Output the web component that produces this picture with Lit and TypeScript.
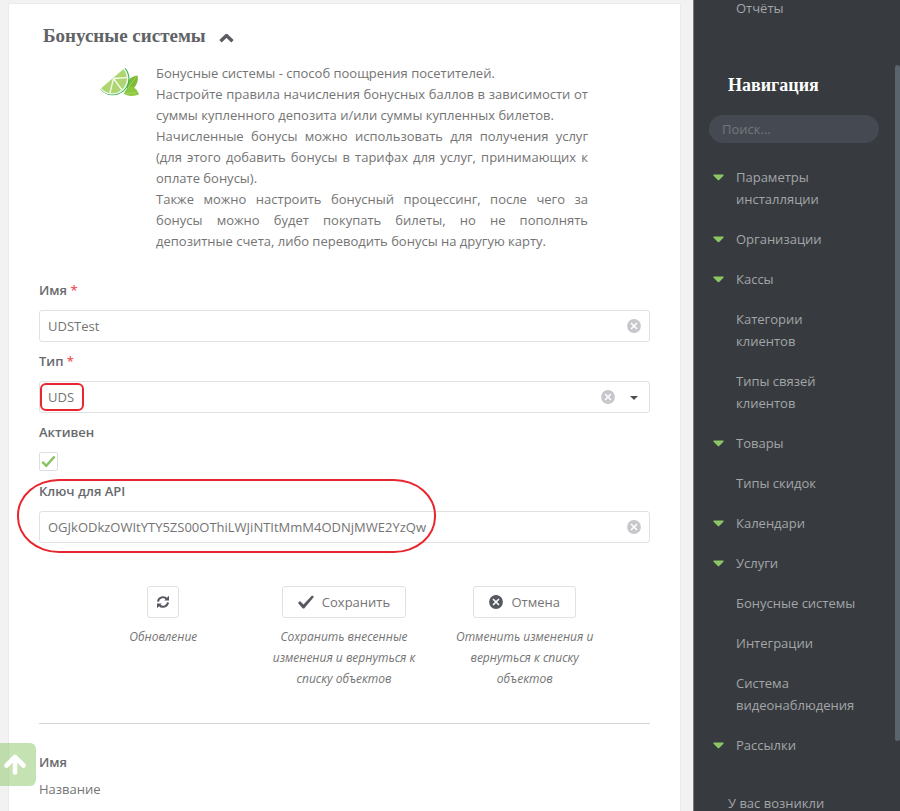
import { LitElement, html, css, nothing } from "lit";
import { customElement, property } from "lit/decorators.js";

const cross = (cls: string) => html`<svg class=${cls} viewBox="0 0 14 14" aria-hidden="true">
  <circle cx="7" cy="7" r="6.9" fill="currentColor" />
  <path d="M4 4l6 6M10 4l-6 6" stroke="#fff" stroke-width="1.6" />
</svg>`;

interface NavItem {
  label: string;
  open?: boolean;
}

const NAV: NavItem[] = [
  { label: "Параметры инсталляции", open: true },
  { label: "Организации", open: true },
  { label: "Кассы", open: true },
  { label: "Категории клиентов" },
  { label: "Типы связей клиентов" },
  { label: "Товары", open: true },
  { label: "Типы скидок" },
  { label: "Календари", open: true },
  { label: "Услуги", open: true },
  { label: "Бонусные системы" },
  { label: "Интеграции" },
  { label: "Система видеонаблюдения" },
  { label: "Рассылки", open: true },
];

@customElement("side-nav")
export class SideNav extends LitElement {
  static styles = css`
    :host {
      display: block;
      position: relative;
      box-sizing: border-box;
      overflow: hidden;
      background: #373b3f;
      border-left: 1px solid #777b7e;
      color: #a3a5a7;
      font: 13px/22px "Open Sans", sans-serif;
    }
    a {
      color: inherit;
      text-decoration: none;
    }
    .top {
      display: block;
      margin: -3px 0 0 42px;
    }
    .title {
      margin: 54px 0 0 34px;
      font: bold 18px/24px "Liberation Serif", serif;
      color: #fff;
    }
    .search {
      display: block;
      box-sizing: border-box;
      width: calc(100% - 36px);
      height: 28px;
      margin: 18px 0 0 15px;
      padding: 0 13px;
      border: 0;
      border-radius: 14px;
      background: #454a52;
      color: #ccc;
      font: inherit;
    }
    .search::placeholder {
      color: #73767a;
      opacity: 1;
    }
    .list {
      list-style: none;
      margin: 23px 16px 0 19px;
      padding: 0;
      display: flex;
      flex-direction: column;
      gap: 18px;
    }
    .item {
      display: grid;
      grid-template-columns: 11px 1fr;
      column-gap: 12px;
    }
    .mark {
      width: 11px;
      height: 7px;
      margin-top: 8px;
      color: #8cc665;
    }
    .link {
      grid-column: 2;
      max-width: 122px;
    }
    .help {
      margin: 36px 34px 0;
    }
    .thumb {
      position: absolute;
      right: 0;
      top: 8%;
      width: 5px;
      height: 83.4%;
      border-radius: 3px;
      background: #59646d;
    }
  `;

  render() {
    return html`
      <a class="top" href="#">Отчёты</a>
      <h2 class="title">Навигация</h2>
      <input class="search" type="search" placeholder="Поиск..." aria-label="Поиск" />
      <nav>
        <ul class="list">
          ${NAV.map(
            (n) => html`<li class="item">
              ${n.open
                ? html`<svg class="mark" viewBox="0 0 11 7" aria-hidden="true">
                    <path d="M1 .5h9q1.2 .2 .4 1.2L6.2 6q-.7 .6-1.4 0L.6 1.7Q-.2 .7 1 .5z" fill="currentColor" />
                  </svg>`
                : nothing}
              <a class="link" href="#">${n.label}</a>
            </li>`
          )}
        </ul>
      </nav>
      <p class="help">У вас возникли</p>
      <div class="thumb"></div>
    `;
  }
}

@customElement("text-field")
export class TextField extends LitElement {
  @property() label = "";
  @property() value = "";
  @property({ type: Boolean }) required = false;
  @property({ type: Boolean }) select = false;
  @property() highlight = "";

  static styles = css`
    :host {
      display: block;
      position: relative;
    }
    .label {
      display: block;
      font-weight: 600;
      line-height: 21px;
      color: #67696d;
    }
    .star {
      color: #f0595b;
    }
    .box {
      position: relative;
      margin-top: 9px;
    }
    .control {
      display: block;
      appearance: none;
      box-sizing: border-box;
      width: 100%;
      height: 32px;
      padding: 0 60px 0 8px;
      border: 1px solid #e1e1e1;
      border-radius: 3px;
      background: #fff;
      color: #747474;
      font: inherit;
      outline: 0;
    }
    .clear {
      position: absolute;
      top: 9px;
      right: 9px;
      width: 14px;
      height: 14px;
      padding: 0;
      border: 0;
      background: none;
      color: #c6c6cb;
    }
    .select .clear {
      right: 35px;
    }
    .cross {
      display: block;
      width: 14px;
      height: 14px;
    }
    .caret {
      position: absolute;
      top: 15px;
      right: 12px;
      width: 8px;
      height: 4px;
      pointer-events: none;
    }
    .ring {
      position: absolute;
      box-sizing: border-box;
      border: 2px solid #e8262f;
      pointer-events: none;
    }
    .value {
      left: 1px;
      top: 2px;
      width: 44px;
      height: 28px;
      border-radius: 6px;
    }
    .field {
      left: -22px;
      top: -2px;
      width: 419px;
      height: 74px;
      border-radius: 42px / 36px;
    }
  `;

  render() {
    return html`
      <label class="label" for="c">${this.label} ${this.required ? html`<span class="star">*</span>` : nothing}</label>
      <div class="box ${this.select ? "select" : ""}">
        ${this.select
          ? html`<select class="control" id="c"><option>${this.value}</option></select>
              <svg class="caret" viewBox="0 0 8 4" aria-hidden="true"><path d="M0 0h8L4 4z" fill="#4d5055" /></svg>`
          : html`<input class="control" id="c" type="text" .value=${this.value} />`}
        <button class="clear" type="button" aria-label="Очистить">${cross("cross")}</button>
        ${this.highlight === "value" ? html`<div class="ring value"></div>` : nothing}
      </div>
      ${this.highlight === "field" ? html`<div class="ring field"></div>` : nothing}
    `;
  }
}

@customElement("app-root")
export class AppRoot extends LitElement {
  static styles = css`
    :host {
      display: grid;
      grid-template-columns: 1fr 207px;
      grid-template-rows: minmax(0, 1fr);
      height: 100vh;
      overflow: hidden;
      background: #f2f2f2;
      color: #747474;
      font: 13px/21px "Open Sans", sans-serif;
    }
    .main {
      min-width: 0;
      padding: 3px 12px 0 8px;
    }
    .card {
      box-sizing: border-box;
      min-height: 100%;
      padding: 20px 30px;
      border: 1px solid #ebebeb;
      background: #fff;
    }
    .head {
      display: flex;
      align-items: center;
      gap: 13px;
      margin-left: 4px;
    }
    .title {
      margin: 0;
      font: bold 19px/24px "Liberation Serif", serif;
      color: #606266;
    }
    .toggle {
      display: block;
      padding: 4px 0 0;
      border: 0;
      background: none;
    }
    .chevron {
      display: block;
      width: 15px;
      height: 10px;
    }
    .intro {
      display: grid;
      grid-template-columns: 40px 1fr;
      column-gap: 16px;
      margin: 15px 62px 0 61px;
    }
    .lime {
      width: 40px;
      height: 32px;
      margin-top: 5px;
    }
    .text {
      margin: 0;
      text-align: justify;
    }
    .form {
      display: flex;
      flex-direction: column;
      gap: 9px;
      margin-top: 28px;
    }
    .label {
      display: block;
      font-weight: 600;
      color: #67696d;
    }
    .tick {
      position: relative;
      width: 20px;
      height: 20px;
      margin-top: 9px;
    }
    .checkbox {
      display: block;
      appearance: none;
      box-sizing: border-box;
      width: 19px;
      height: 19px;
      margin: 0;
      border: 1px solid #dedede;
      border-radius: 2px;
      background: #fff;
    }
    .check {
      position: absolute;
      left: 2px;
      top: 3px;
      width: 15px;
      height: 13px;
      visibility: hidden;
      pointer-events: none;
    }
    .checkbox:checked + .check {
      visibility: visible;
    }
    .actions {
      display: grid;
      grid-template-columns: repeat(3, 1fr);
      margin: 43px 35px 0 34px;
    }
    .action {
      display: flex;
      flex-direction: column;
      align-items: center;
      gap: 8px;
      padding: 0 15px;
      text-align: center;
    }
    .button {
      display: flex;
      align-items: center;
      gap: 8px;
      box-sizing: border-box;
      height: 32px;
      padding: 0 15px;
      border: 1px solid #e1e1e1;
      border-radius: 3px;
      background: #fff;
      color: #747474;
      font: inherit;
    }
    .square {
      padding: 0 8px;
    }
    .icon {
      width: 14px;
      height: 14px;
      color: #56585f;
    }
    .wide {
      width: 16px;
    }
    .hint {
      margin: 0;
      font-size: 12px;
      font-style: italic;
    }
    .rule {
      height: 1px;
      margin: 34px 0 28px;
      border: 0;
      background: #d4d6d8;
    }
    .note {
      margin: 6px 0 0;
    }
    .up {
      position: fixed;
      left: 0;
      bottom: 25px;
      display: grid;
      place-items: center;
      width: 36px;
      height: 43px;
      padding: 0 7px 0 0;
      border: 0;
      border-radius: 0 6px 6px 0;
      background: rgba(140, 198, 101, 0.5);
    }
    .arrow {
      width: 22px;
      height: 21px;
    }
  `;

  private lime() {
    return html`<svg class="lime" viewBox="0 0 40 32" aria-hidden="true">
      <path d="M27 21Q26 9 37.500 7.500 39 14 34 20q-3 2-7 1z" fill="#7dbb36" />
      <path d="M24 26q2-7 8-7.500 5 2 7 8-8 3-15-.5z" fill="#8cc83f" />
      <path d="M28 20L36 9M26 25.500l10-.5" stroke="#b3dc78" stroke-width=".7" />
      <path d="M25.500 0A16.400 16.400 0 1 1 .3 21.500z" fill="#2fb45c" />
      <path d="M24.600 .4A15.300 15.300 0 1 1 .3 20.900z" fill="#f4fbe9" />
      <path d="M23.300 1.200A14 14 0 1 1 1.200 20.200z" fill="#aed572" />
      <path d="M13.500 10.500L27 9.600M13.500 10.500L22 22M13.500 10.500L9.800 25.500" stroke="#f4fbe9" stroke-width="1.300" />
    </svg>`;
  }

  render() {
    return html`
      <main class="main">
        <section class="card">
          <header class="head">
            <h1 class="title">Бонусные системы</h1>
            <button class="toggle" type="button" aria-label="Свернуть">
              <svg class="chevron" viewBox="0 0 15 10">
                <path d="M1.500 8.300l6-5.800 6 5.800" fill="none" stroke="#5b5d63" stroke-width="3.400" stroke-linejoin="round" />
              </svg>
            </button>
          </header>

          <div class="intro">
            ${this.lime()}
            <p class="text">
              Бонусные системы - способ поощрения посетителей.<br />
              Настройте правила начисления бонусных баллов в зависимости от суммы купленного депозита и/или суммы
              купленных билетов.<br />
              Начисленные бонусы можно использовать для получения услуг (для этого добавить бонусы в тарифах для
              услуг, принимающих к оплате бонусы).<br />
              Также можно настроить бонусный процессинг, после чего за бонусы можно будет покупать билеты, но не
              пополнять депозитные счета, либо переводить бонусы на другую карту.
            </p>
          </div>

          <form class="form">
            <text-field label="Имя" value="UDSTest" required></text-field>
            <text-field label="Тип" value="UDS" required select highlight="value"></text-field>
            <div>
              <label class="label" for="active">Активен</label>
              <div class="tick">
                <input class="checkbox" id="active" type="checkbox" checked />
                <svg class="check" viewBox="0 0 15 13" aria-hidden="true">
                  <path d="M1.300 6.800l4 4L13.500 1.500" fill="none" stroke="#86c35c" stroke-width="2.400" />
                </svg>
              </div>
            </div>
            <text-field
              label="Ключ для API"
              value="OGJkODkzOWItYTY5ZS00OThiLWJiNTItMmM4ODNjMWE2YzQw"
              highlight="field"
            ></text-field>
          </form>

          <div class="actions">
            <div class="action">
              <button class="button square" type="button" aria-label="Обновление">
                <svg class="icon" viewBox="0 0 14 14" fill="none" stroke="currentColor" stroke-width="2">
                  <path d="M2 6.600A5 5 0 0 1 10.800 4M12 7.400A5 5 0 0 1 3.200 10" />
                  <path d="M13 .8v4.700H8.300zM1 13.200V8.500h4.700z" fill="currentColor" stroke="none" />
                </svg>
              </button>
              <p class="hint">Обновление</p>
            </div>
            <div class="action">
              <button class="button" type="button">
                <svg class="icon wide" viewBox="0 0 16 14">
                  <path d="M0 8l2-2 3.500 3.400L14 .5l2 1.300L6.200 13.500H4.800z" fill="currentColor" />
                </svg>
                Сохранить
              </button>
              <p class="hint">Сохранить внесенные изменения и вернуться к списку объектов</p>
            </div>
            <div class="action">
              <button class="button" type="button">${cross("icon")} Отмена</button>
              <p class="hint">Отменить изменения и вернуться к списку объектов</p>
            </div>
          </div>

          <hr class="rule" />
          <span class="label">Имя</span>
          <p class="note">Название</p>
        </section>
      </main>
      <side-nav></side-nav>
      <button class="up" type="button" aria-label="Наверх">
        <svg class="arrow" viewBox="0 0 22 21">
          <path d="M11 18.500V4M2.500 11.500L11 3l8.500 8.500" fill="none" stroke="#fff" stroke-width="4.600" stroke-linecap="round" stroke-linejoin="round" />
        </svg>
      </button>
    `;
  }
}
